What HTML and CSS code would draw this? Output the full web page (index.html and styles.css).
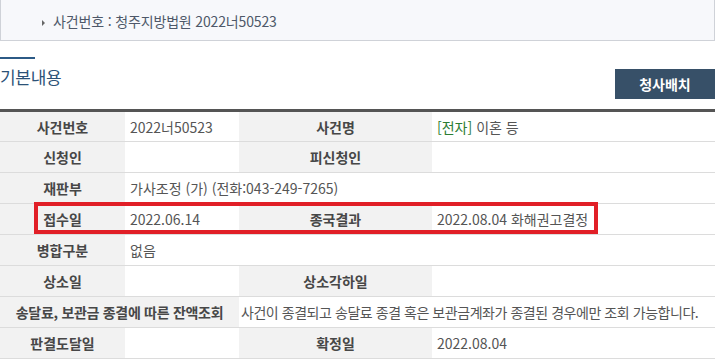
FILE: index.html
```html
<!DOCTYPE html>
<html lang="ko">
<head>
<meta charset="utf-8">
<link rel="stylesheet" href="styles.css">
</head>
<body>
<div class="summary">
  <span class="bullet"></span>
  <span class="summary-text">사건번호 : 청주지방법원 2022너50523</span>
</div>
<div class="title-row">
  <h2 class="title">기본내용</h2>
  <button class="btn">청사배치</button>
</div>
<div class="table-wrap">
  <table class="info">
    <colgroup>
      <col class="c1"><col class="c2"><col class="c3"><col class="c4">
    </colgroup>
    <tbody>
      <tr><th>사건번호</th><td>2022너50523</td><th>사건명</th><td><span class="green">[전자]</span> 이혼 등</td></tr>
      <tr><th>신청인</th><td></td><th>피신청인</th><td></td></tr>
      <tr><th>재판부</th><td colspan="3">가사조정 (가) (전화:043-249-7265)</td></tr>
      <tr><th>접수일</th><td>2022.06.14</td><th>종국결과</th><td>2022.08.04 화해권고결정</td></tr>
      <tr><th>병합구분</th><td colspan="3">없음</td></tr>
      <tr><th>상소일</th><td></td><th>상소각하일</th><td></td></tr>
      <tr><th colspan="2" class="long">송달료, 보관금 종결에 따른 잔액조회</th><td colspan="2" class="notice">사건이 종결되고 송달료 종결 혹은 보관금계좌가 종결된 경우에만 조회 가능합니다.</td></tr>
      <tr><th>판결도달일</th><td></td><th>확정일</th><td>2022.08.04</td></tr>
    </tbody>
  </table>
  <div class="highlight"></div>
</div>
</body>
</html>
```
FILE: styles.css
```css
* { box-sizing: border-box; }
body {
  margin: 0;
  background: #fff;
  font-family: "Noto Sans CJK KR", "Noto Sans", sans-serif;
  font-size: 14px;
  color: #555;
  overflow: hidden;
}
.summary {
  height: 41px;
  background: #f7f8fb;
  border: 1px solid #cfd2d8;
  border-top: none;
  display: flex;
  align-items: center;
  padding-left: 41px;
  padding-top: 2px;
}
.bullet {
  width: 0;
  height: 0;
  border-left: 3px solid #666;
  border-top: 3px solid transparent;
  border-bottom: 3px solid transparent;
  margin-right: 8px;
  margin-top: 4px;
}
.summary-text {
  color: #4e5869;
  font-size: 14px;
  letter-spacing: -0.15px;
}
.title-row {
  display: flex;
  justify-content: space-between;
  align-items: flex-start;
  padding-top: 16px;
  height: 58px;
  margin-bottom: 10px;
}
.title {
  margin: 0;
  font-size: 17px;
  font-weight: 400;
  color: #2c5277;
  line-height: 28px;
  letter-spacing: -0.3px;
}
.title::before {
  content: "";
  display: block;
  width: 35px;
  height: 2px;
  background: #2c5a86;
  margin-bottom: 4px;
}
.btn {
  margin-top: 12px;
  width: 100px;
  height: 30px;
  border: none;
  background: #375068;
  color: #fff;
  font-family: inherit;
  font-size: 14px;
  font-weight: 600;
  padding: 0;
}
.table-wrap {
  position: relative;
}
.info {
  width: 715px;
  border-collapse: collapse;
  table-layout: fixed;
  border-top: 3px solid #555;
}
.c1 { width: 125px; }
.c2 { width: 114px; }
.c3 { width: 193px; }
.c4 { width: 283px; }
.info th, .info td {
  height: 31px;
  padding: 0;
  border-bottom: 1px solid #dcdcdc;
  line-height: 20px;
  white-space: nowrap;
}
.info th {
  background: #f2f2f2;
  color: #474747;
  font-weight: 600;
  text-align: center;
}
.info th.long {
  letter-spacing: -0.3px;
}
.info td {
  background: #fff;
  padding-left: 5px;
  color: #555;
}
.info td.notice {
  padding-left: 2px;
  letter-spacing: -0.45px;
}
.green { color: #2b7d32; }
.highlight {
  position: absolute;
  left: 34px;
  top: 93px;
  width: 564px;
  height: 32px;
  border: 4px solid #e11f27;
}
```
